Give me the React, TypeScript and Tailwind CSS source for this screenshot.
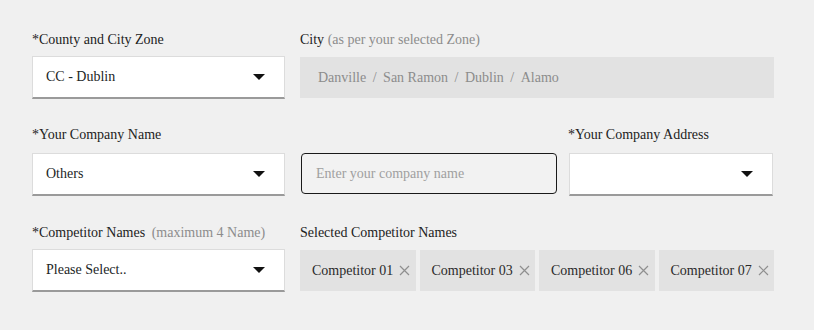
function Caret() {
  return (
    <svg width="12" height="6" viewBox="0 0 12 6" className="shrink-0">
      <path d="M0 0 H12 L6 6 Z" fill="#111" />
    </svg>
  )
}

function Select({ value, w }: { value?: string; w: string }) {
  return (
    <div
      className={`${w} h-[43px] bg-white border border-[#dcdcdc] border-b-2 border-b-[#9a9a9a] flex items-center justify-between pl-[13px] pr-[19px] text-[14px] text-[#1c2626]`}
    >
      <span>{value}</span>
      <Caret />
    </div>
  )
}

function Chip({ name }: { name: string }) {
  return (
    <div className="flex-1 h-[41px] bg-[#e2e2e2] flex items-center pl-[12px] text-[14px] text-[#2a2a2a]">
      <span>{name}</span>
      <span className="ml-[6px]">
        <svg width="11" height="11" viewBox="0 0 11 11">
          <path d="M1 1 L10 10 M10 1 L1 10" stroke="#8f8f8f" strokeWidth="1.2" />
        </svg>
      </span>
    </div>
  )
}

const cities = ["Danville", "San Ramon", "Dublin", "Alamo"]

export default function App() {
  return (
    <div className="w-[814px] h-[330px] bg-[#f0f0f0] pt-[30px] pl-[32px] [font-family:Liberation_Serif,serif] text-[14px] leading-[20px] text-[#222]">
      {/* row 1 */}
      <div className="flex">
        <div className="w-[253px]">
          <div className="mb-[6px]">*County and City Zone</div>
          <Select value="CC - Dublin" w="w-[253px]" />
        </div>
        <div className="ml-[15px] w-[474px]">
          <div className="mb-[7px]">
            City <span className="text-[#8c8c8c]">(as per your selected Zone)</span>
          </div>
          <div className="h-[41px] bg-[#e2e2e2] flex items-center pl-[18px] text-[#8c8c8c]">
            {cities.map((c, i) => (
              <span key={c} className="flex">
                {i > 0 && <span className="mx-[6.5px]">/</span>}
                {c}
              </span>
            ))}
          </div>
        </div>
      </div>

      {/* row 2 */}
      <div className="flex mt-[26px]">
        <div className="w-[253px]">
          <div className="mb-[8px]">*Your Company Name</div>
          <Select value="Others" w="w-[253px]" />
        </div>
        <div className="ml-[16px] w-[256px] pt-[28px]">
          <div className="h-[41px] border border-[#1a1a1a] rounded-[4px] bg-[#f2f2f2] flex items-center pl-[14px] text-[#a0a0a0]">
            Enter your company name
          </div>
        </div>
        <div className="ml-[12px] w-[204px]">
          <div className="mb-[8px] -ml-[1px]">*Your Company Address</div>
          <Select w="w-[204px]" />
        </div>
      </div>

      {/* row 3 */}
      <div className="flex mt-[27px]">
        <div className="w-[253px]">
          <div className="mb-[6px]">
            *Competitor Names <span className="ml-[3px] text-[#8c8c8c]">(maximum 4 Name)</span>
          </div>
          <Select value="Please Select.." w="w-[253px]" />
        </div>
        <div className="ml-[15px] w-[474px]">
          <div className="mb-[7px]">Selected Competitor Names</div>
          <div className="flex gap-[4px]">
            <Chip name="Competitor 01" />
            <Chip name="Competitor 03" />
            <Chip name="Competitor 06" />
            <Chip name="Competitor 07" />
          </div>
        </div>
      </div>
    </div>
  )
}
